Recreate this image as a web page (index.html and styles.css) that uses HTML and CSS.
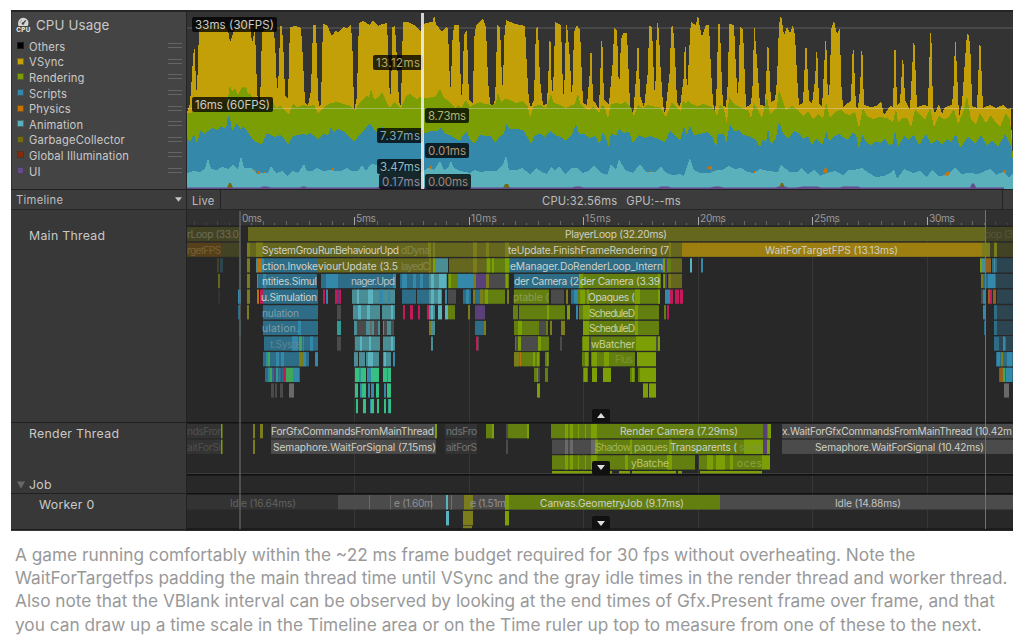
FILE: index.html
```html
<!DOCTYPE html>
<html lang="en">
<head>
<meta charset="utf-8">
<title>CPU Usage</title>
<link rel="stylesheet" href="styles.css">
</head>
<body>
<figure class="figure">
  <div class="profiler">
    <section class="module">
      <div class="legend">
        <div class="legend-title">
          <svg class="cpu-icon" viewBox="0 0 15 16"><path d="M2.500 9C1 4.500 3.500.8 7.300.8s6.500 3.700 4.500 8.200z" fill="#d6d6d6"/><path d="M7.200 6.300 9.800 3.400" stroke="#444" stroke-width="1.300"/><circle cx="7" cy="6.500" r="1.300" fill="#444"/><path d="M4 5.500 5.500 3.300" stroke="#888"/><text x="7.300" y="14.800" text-anchor="middle" textLength="14">CPU</text></svg>
          <span>CPU Usage</span>
        </div>
        <ul class="series">
          <li><i class="swatch others"></i><span>Others</span><b class="grip"></b></li>
          <li><i class="swatch vsync"></i><span>VSync</span><b class="grip"></b></li>
          <li><i class="swatch rendering"></i><span>Rendering</span><b class="grip"></b></li>
          <li><i class="swatch scripts"></i><span>Scripts</span><b class="grip"></b></li>
          <li><i class="swatch physics"></i><span>Physics</span><b class="grip"></b></li>
          <li><i class="swatch animation"></i><span>Animation</span><b class="grip"></b></li>
          <li><i class="swatch gc"></i><span>GarbageCollector</span><b class="grip"></b></li>
          <li><i class="swatch gi"></i><span>Global Illumination</span><b class="grip"></b></li>
          <li><i class="swatch ui"></i><span>UI</span><b class="grip"></b></li>
        </ul>
      </div>
      <svg class="chart" id="chart" viewBox="187 12 826 177"></svg>
    </section>
    <div class="toolbar">
      <div class="view-select"><span>Timeline</span><svg class="caret" viewBox="0 0 8 5"><path d="M0 0h8L4 5z"/></svg></div>
      <div class="live">Live</div>
      <div class="stats"><span>CPU:32.56ms</span><span>GPU:--ms</span></div>
      <div class="tool-end"></div>
    </div>
    <section class="timeline">
      <div class="threads">
        <div class="thread main">Main Thread</div>
        <div class="thread render">Render Thread</div>
        <div class="thread job"><svg class="fold" viewBox="0 0 9 8"><path d="M0 0h9L4.500 8z"/></svg>Job</div>
        <div class="thread worker">Worker 0</div>
        <div class="thread more"></div>
      </div>
      <svg class="tracks" id="tracks" viewBox="187 210 826 321"></svg>
    </section>
  </div>
  <figcaption class="caption">A game running comfortably within the ~22 ms frame budget required for 30 fps without overheating. Note the<br>WaitForTargetfps padding the main thread time until VSync and the gray idle times in the render thread and worker thread.<br>Also note that the VBlank interval can be observed by looking at the end times of Gfx.Present frame over frame, and that<br>you can draw up a time scale in the Timeline area or on the Time ruler up top to measure from one of these to the next.</figcaption>
</figure>
<script src="profiler.js"></script>
</body>
</html>
```
FILE: styles.css
```css
* { box-sizing: border-box; }
body { margin: 0; background: #fff; font-family: Inter, "Liberation Sans", sans-serif; }
.figure { margin: 0; padding: 10px 0 0 11px; }
.profiler { width: 1002px; height: 521px; background: #282828; color: #c9c9c9; display: flex; flex-direction: column; overflow: hidden; border-top: 2px solid #242424; }
.module { display: flex; height: 177px; flex: none; }
.legend { width: 176px; background: #444; border-right: 1px solid #242424; border-left: 1px solid #303030; padding: 4px 4px 0 4px; }
.legend-title { display: flex; align-items: center; gap: 5px; height: 18px; font-size: 13.3px; letter-spacing: .15px; }
.cpu-icon { width: 15px; height: 16px; }
.cpu-icon text { font: 800 6.2px Inter, sans-serif; fill: #e2e2e2; }
.series { list-style: none; margin: 4px 0 0; padding: 0; font-size: 11.2px; letter-spacing: .16px; }
.series li { display: flex; align-items: center; height: 15.6px; line-height: 14px; }
.series span { padding-top: 2px; }
.swatch { width: 7px; height: 7px; margin: 0 5px 0 1px; border: 1px solid #30303088; }
.grip { margin-left: auto; width: 14px; height: 5px; border-top: 1px solid #656565; border-bottom: 1px solid #656565; }
.others { background: #000; } .vsync { background: #c6a209; } .rendering { background: #7b9e05; }
.scripts { background: #3488a9; } .physics { background: #c97205; } .animation { background: #5ab1bc; }
.gc { background: #726b10; } .gi { background: #842b0b; } .ui { background: #654b8c; }
.chart { width: 826px; height: 177px; background: #333; display: block; }
.badge { font-size: 11.5px; }
.toolbar { display: flex; flex: none; height: 21px; background: #3c3c3c; border-top: 1px solid #202020; border-bottom: 1px solid #262626; font-size: 11.2px; line-height: 22px; letter-spacing: .2px; color: #bdbdbd; }
.view-select { width: 176px; padding: 0 4px 0 5px; display: flex; justify-content: space-between; align-items: center; border-right: 1px solid #232323; }
.view-select span { padding-top: 1px; letter-spacing: .3px; }
.caret { width: 7px; height: 5px; fill: #c4c4c4; }
.live { width: 34px; padding-left: 5px; border-right: 1px solid #232323; }
.stats { flex: 1; display: flex; justify-content: center; gap: 9px; }
.tool-end { width: 11px; border-left: 1px solid #232323; }
.timeline { display: flex; height: 321px; flex: none; }
.threads { width: 176px; background: #383838; border-right: 1px solid #222; display: flex; flex-direction: column; font-size: 12.3px; letter-spacing: .3px; line-height: 16px; }
.thread { border-bottom: 1px solid #202020; flex: none; }
.main { height: 213px; padding: 18px 0 0 18px; }
.render { height: 51px; padding: 3px 0 0 18px; border-bottom: 0; }
.job { height: 20px; padding: 3px 0 0 6px; display: flex; gap: 4px; align-items: center; }
.fold { width: 8px; height: 8px; fill: #686868; }
.worker { height: 36px; padding: 3px 0 0 28px; }
.more { border: 0; }
.tracks { width: 826px; height: 321px; display: block; background: #282828; }
.tracks text { font-size: 10.2px; }
.caption { margin: 12px 0 0 4px; color: #999; font-size: 17.24px; line-height: 23.2px; white-space: nowrap; }
```
FILE: profiler.js
```js
const NS = 'http://www.w3.org/2000/svg';
function el(parent, name, attrs, text) {
  const n = document.createElementNS(NS, name);
  for (const k in attrs) n.setAttribute(k, attrs[k]);
  if (text) n.textContent = text;
  parent.appendChild(n);
  return n;
}

/* ---------- usage chart ---------- */
const chart = document.getElementById('chart');
const vsync = '187,113 190,103 191,90 193,58 194,49 195,50 196,90 197,90 198,60 199,30 203,24 208,27 214,24 222,26 228,30 230,42 231,40 234,31 238,24 244,20 250,24 252,43 255,30 257,88 258,104 260,104 261,70 262,32 268,28 274,31 276,60 277,94 279,70 280,26 282,26 284,60 285,96 288,99 289,60 290,27 295,26 301,28 303,60 305,103 308,106 311,90 313,28 313,25 316,25 318,95 319,106 321,105 322,60 323,24 327,25 332,36 336,30 338,33 343,27 347,28 351,24 353,60 354,112 357,96 358,50 359,23 363,21 370,25 373,20 378,26 382,24 387,23 389,70 390,105 392,60 392,27 395,26 397,60 399,102 401,106 402,60 403,22 408,22 414,25 421,31 425,23 433,22 434,15 436,24 442,32 447,26 448,30 450,85 451,88 452,45 454,25 459,25 461,90 462,100 464,35 466,31 467,32 469,100 473,103 474,40 476,25 483,18 486,28 488,80 490,103 494,108 496,80 497,25 500,27 502,80 503,90 504,40 506,20 515,24 525,26 527,70 529,102 531,107 534,100 535,60 536,28 538,27 540,80 543,105 547,104 549,60 550,22 552,98 554,70 555,22 561,25 563,90 564,98 566,25 567,24 570,60 572,103 574,32 577,25 580,30 583,103 587,105 590,70 591,37 593,100 596,104 599,109 602,28 604,100 609,104 613,60 614,28 617,30 619,93 621,40 623,33 627,33 630,105 633,116 637,65 638,32 640,95 644,108 648,70 649,26 652,27 653,55 655,102 657,20 659,30 660,60 663,104 665,115 670,70 671,27 673,25 675,55 677,102 680,107 684,75 685,30 687,95 690,35 691,22 696,25 698,15 700,28 702,37 706,25 709,25 711,70 713,102 715,115 717,80 718,24 720,24 721,60 723,106 726,107 728,80 729,24 734,25 736,70 738,100 740,27 743,30 746,107 748,106 751,104 753,80 754,21 757,60 760,105 765,106 768,36 769,60 771,102 775,100 777,80 779,25 781,15 784,35 787,27 790,33 793,25 795,35 797,75 799,105 803,103 806,37 809,100 812,104 815,80 817,43 819,103 822,107 824,70 826,32 828,100 830,80 831,30 834,21 837,34 840,28 841,80 843,107 848,103 851,100 853,39 856,107 858,108 860,90 862,38 864,105 870,107 877,106 881,101 884,115 890,106 893,107 895,31 897,105 900,102 903,52 905,100 910,110 914,33 917,107 924,105 928,106 929,70 931,21 933,107 935,113 939,104 942,114 945,107 948,106 952,105 954,80 955,32 957,70 959,117 962,104 965,60 967,34 969,35 971,60 972,106 977,108 980,33 983,108 990,105 996,108 1003,105 1008,109 1011,108 1012,150 1013,170';
const rendering = '187,113 196,112 205,109 216,112 228,98 230,85 232,92 235,88 238,95 242,87 245,88 246,86 248,94 250,93 253,99 262,104 268,106 272,100 276,108 280,106 286,112 289,114 293,104 297,107 303,105 309,106 314,105 318,113 325,106 331,103 337,102 343,104 351,106 355,111 360,102 366,96 369,97 371,89 374,99 378,98 382,92 388,105 390,108 394,102 401,108 406,96 410,94 417,99 422,96 425,98 435,97 440,89 444,98 450,102 455,108 458,105 461,108 466,100 470,107 475,104 480,102 485,104 492,105 496,103 498,92 501,102 505,99 510,100 516,103 522,101 528,107 530,117 534,106 540,105 546,108 551,94 554,103 560,105 566,108 572,105 575,104 578,93 580,104 584,108 589,110 593,107 599,113 602,105 605,108 608,119 611,104 616,103 621,104 625,102 631,107 634,117 638,105 643,108 648,105 656,107 660,107 666,117 672,102 676,107 681,111 683,100 686,104 688,100 691,104 697,106 703,104 710,106 715,110 717,116 720,104 724,109 727,124 729,96 733,103 738,106 742,108 749,111 751,119 754,103 757,108 762,118 767,97 770,114 775,110 777,107 779,89 783,101 786,110 792,106 797,109 803,116 808,111 813,119 818,114 823,119 826,102 830,118 836,111 841,110 846,114 850,115 855,112 859,128 863,108 867,116 873,119 880,117 887,118 893,122 896,109 898,122 903,118 907,118 911,127 915,110 921,116 925,120 930,108 934,127 939,116 944,119 948,118 954,109 958,124 963,113 967,96 971,120 976,125 980,113 986,123 991,115 995,122 1000,127 1006,113 1010,120 1013,157';
const scripts = '187,137 190,142 194,134 197,143 201,129 204,134 208,131 213,128 217,130 221,126 226,129 228,116 230,117 232,131 237,123 240,129 243,126 247,131 251,137 255,142 262,144 267,133 271,135 275,137 280,135 284,138 288,145 293,136 303,134 307,135 310,133 313,135 318,140 323,134 328,135 331,127 334,132 337,129 343,131 348,135 354,142 360,134 365,129 370,123 373,128 378,134 382,126 388,138 395,130 401,137 408,130 414,132 420,135 425,133 432,131 437,131 441,127 445,134 450,135 455,138 460,141 463,135 467,132 470,140 475,143 480,135 486,136 491,136 495,143 500,136 504,134 506,123 510,129 516,129 523,130 528,138 531,144 535,135 541,134 545,137 550,131 557,136 561,137 566,141 572,134 576,124 579,134 584,134 590,138 595,136 600,144 602,133 605,135 609,147 611,133 616,136 619,129 623,133 629,132 633,143 639,135 645,138 650,136 658,139 665,142 670,131 675,136 680,141 684,126 687,135 690,126 694,135 700,134 707,132 712,136 716,147 718,134 721,134 724,133 726,143 730,124 734,131 739,130 743,135 749,136 755,139 760,147 763,139 766,143 768,128 771,145 776,138 779,121 783,133 788,139 794,131 800,134 803,139 808,136 812,145 816,139 822,145 827,131 829,142 833,137 839,134 844,138 848,140 852,133 856,134 859,150 862,134 866,142 871,145 875,141 880,143 885,139 889,145 893,144 895,130 898,147 904,136 908,140 914,135 919,145 926,134 931,144 937,140 942,144 947,139 951,142 956,134 960,148 968,137 975,144 981,135 987,146 992,140 998,147 1005,134 1011,146 1013,162';
const animation = '187,173 193,171 200,172 205,169 208,158 211,169 217,170 222,167 228,169 233,165 238,169 241,156 244,168 251,168 257,174 262,173 268,173 271,166 276,173 282,171 287,176 292,171 298,173 304,164 307,171 312,171 317,168 323,171 330,170 336,171 341,171 347,168 352,171 358,171 362,165 366,171 371,164 378,165 384,173 390,168 397,172 405,171 411,169 420,173 428,168 434,170 440,161 444,170 448,168 451,161 454,168 460,171 470,173 475,170 480,172 488,171 497,171 503,164 506,156 509,170 517,170 522,168 530,174 536,168 542,172 547,174 551,167 555,171 559,166 565,174 572,168 577,168 583,173 588,171 594,166 600,172 607,175 611,164 616,170 619,159 625,170 633,173 640,164 646,172 655,172 661,166 666,173 673,175 680,174 684,176 690,158 694,170 700,173 710,173 717,170 722,170 729,166 735,169 741,168 748,172 754,173 760,169 768,171 778,172 781,165 790,172 797,172 801,168 808,174 814,170 820,176 827,173 835,171 843,175 848,170 854,170 862,168 869,173 876,177 884,176 890,173 894,169 897,179 904,169 913,173 920,171 927,177 932,170 939,176 947,175 955,168 961,174 969,173 978,174 983,172 990,169 996,175 1003,172 1009,177 1013,173';
function area(points, fill) {
  el(chart, 'polygon', { points: '187,190 ' + points + ' 1013,190', fill, 'shape-rendering': 'crispEdges' });
}
area(vsync, '#c4a008');
area(rendering, '#7b9e05');
area(scripts, '#3488a9');
[[254, 171], [258, 172], [264, 173], [332, 169], [376, 168], [430, 167], [506, 161], [538, 173], [612, 168], [650, 172], [754, 172], [778, 172], [907, 172], [935, 175], [1004, 171]].forEach(p =>
  el(chart, 'rect', { x: p[0], y: p[1] - 1, width: 2, height: 4, fill: '#c97205' }));
area(animation, '#5ab1bc');
el(chart, 'path', { d: 'M706 168l4-2 2 1v3l-3-1zM823 173l2-6h1l2 6zM944 175l4-4 2 2-2 3z', fill: '#c97205' });
el(chart, 'path', { d: 'M227 188l2-5h2l2 5zM503 188l2-4h3l2 4zM779 188l2-5h2l2 5z', fill: '#726b10' });
el(chart, 'path', { d: 'M187 187.500h73l3-1h4l4 1h29l2-1h3l2 1h69l4-1h4l4 1h184l4-1h4l4 1h74l3-1h7l3 1h39l5-1h4l5 1h51l4-1h6l3 1h8l7-1h14l4 1h19l3-1h15l3 1h109l2-4h2l2 4h28v3H187z', fill: '#654b8c' });
el(chart, 'rect', { x: 187, y: 27, width: 826, height: 2, fill: '#aaa', opacity: .17 });
el(chart, 'rect', { x: 187, y: 108, width: 826, height: 1, fill: '#eee', opacity: .32 });
[[192, 17, 85, '33ms (30FPS)', '#ccc'], [192, 97, 81, '16ms (60FPS)', '#ccc'],
 [373, 55, 50, '13.12ms', '#b5ab70'], [377, 128, 46, '7.37ms', '#83a8b5'], [377, 159, 46, '3.47ms', '#94bcc2'], [379, 174, 44, '0.17ms', '#978ba6'],
 [425, 108, 44, '8.73ms', '#a9b572'], [425, 143, 44, '0.01ms', '#bb9870'], [425, 174, 46, '0.00ms', '#a98274']].forEach(b => {
  el(chart, 'rect', { x: b[0], y: b[1], width: b[2], height: 15, rx: 2, fill: '#000', opacity: .77 });
  el(chart, 'text', { class: 'badge', x: b[0] + 3, y: b[1] + 12, fill: b[4], textLength: b[2] - 6 }, b[3]);
});
el(chart, 'rect', { x: 421, y: 13, width: 3, height: 176, fill: '#f0f0ee', opacity: .85 });

/* ---------- timeline tracks ---------- */
const tracks = document.getElementById('tracks');
const C = {
  o: '#65671f', O: '#7b7d1d', d: '#424324', D: '#55401b', y: '#9c7f10',
  b: '#2d6d87', B: '#3488aa', n: '#2d4551', t: '#4b8d95', T: '#5ab3be',
  g: '#637f10', G: '#7b9f05', k: '#4b4b4b', K: '#696969', m: '#333333',
  r: '#c6195b', e: '#37c083', E: '#319b91', f: '#3ea858', w: '#b97309', p: '#594078', q: '#93601c'
};
const rect = (x, y, w, h, fill, opacity) => el(tracks, 'rect', { x, y, width: w, height: h, fill, opacity: opacity || 1 });
function row(y, h, spec) {
  spec.trim().split(/\s+/).forEach(s => {
    const m = s.match(/^([a-zA-Z])([\d.]+)-([\d.]+)$/);
    rect(+m[2], y, m[3] - m[2], h, C[m[1]]);
  });
}
/* ruler */
rect(187, 210, 826, 16, '#363636');
rect(187, 210, 53, 16, '#303030');
rect(985, 210, 28, 16, '#303030');
rect(187, 225.5, 826, 1, '#202020');
for (let i = -4; i < 68; i++) {
  const x = 240 + i * 11.445;
  if (i % 10) rect(Math.round(x), i % 2 ? 223 : 221, 1, i % 2 ? 2 : 4, i < 0 || i > 65 ? '#444' : '#686868');
}
for (let i = 0; i < 7; i++) {
  const x = Math.round(240 + i * 114.45);
  if (i) { rect(x, 217, 1, 8, '#aaa'); rect(x, 226, 1, 304, '#373737'); }
  el(tracks, 'text', { x: x + 2, y: 222, fill: '#999', textLength: i < 2 ? 20 : 26 }, i * 5 + 'ms');
}

const main = [
  'd187-240 o248-985 d985-1013',
  'D187-221 d221-240 O247-250 o250-682 O256-263 O428-431 O433-435 O473-477 O486-489 O505-509 O669-671 y682-982 O982-990 d990-1013 O994-997',
  'd217-219 n220-223 n239-241 O247-250 t256-258 w258-261 B261-264 b264-318 o318-435 O429-431 G433-435 t435-448 o449-486 O473-477 g486-510 G487-490 G492-494 G505-509 b510-663 G663-667 p665-667 g667-671 o671-682 T690-692 B701-703 G980-982 t982-985 q985-991 b992-997 t994-995 n997-1013',
  'o218-220 n239-241 O247-250 w257-258 b258-317 B263-266 b321-396 B326-338 B393-396 b400-429 B402-407 B413-416 B420-423 t429-447 T431-434 T439-446 g448-458 G449-451 B458-474 O473-476 p476-486 O486-489 k489-505 g505-509 G506-508 b514-579 g579-661 G579-583 G658-660 B663-664 G664-666 p665-667 o668-682 O669-671 O981-983 b983-996 B988-995 n996-1013',
  'm218-220 B238-241 O247-250 w257-259 r260-263 b263-318 r323-325 B326-328 r335-337 p337-340 r340-341 t352-395 T357-359 T368-373 B379-383 B388-390 b402-416 b417-429 t429-442 T431-434 T438-441 B445-447 k448-456 b463-471 B466-469 O473-475 b475-483 O480-483 g483-505 G485-488 O507-509 g514-549 k551-564 O566-568 b571-574 B574-577 B577-580 g578-660 G580-585 G587-589 G635-640 G658-660 B665-670 r670-673 r675-679 r680-683 k981-983 B983-986 q988-990 r990-992 q993-996 n997-1013',
  'b238-240 O247-249 b263-318 k337-341 t353-380 T358-361 T367-370 t382-395 T391-393 r403-405 r410-413 r418-420 r427-429 t429-435 T431-433 T438-442 T445-448 g448-455 O468-470 p475-485 g513-518 g519-565 G547-549 G567-570 B576-578 g579-659 G583-590 G635-638 g664-666 r667-669 B983-986 n994-1013 b994-997',
  'n239-241 b263-318 B298-301 E337-341 t354-380 k357-366 K370-372 k374-378 t383-394 k384-387 k391-394 O429-431 t431-435 b475-484 O484-486 g514-548 G518-522 k539-546 O550-552 O561-565 g583-659 G583-589 G635-638 b984-986 n994-1013 b994-997',
  'b264-318 B292-298 f299-302 O303-304 B310-313 k337-341 t355-380 T360-362 T369-371 t383-395 T391-393 t431-433 r476-478 k478-479 g515-549 k516-538 G518-521 G538-541 k560-562 g582-660 G583-589 k589-591 G636-656 k656-658 G658-660 b994-1013 n999-1003 B1003-1005 n1006-1013',
  'b263-309 B266-268 f268-270 B276-279 B281-284 O299-303 B303-306 B315-318 t354-358 t359-365 t366-379 T368-373 t383-391 T384-386 B393-395 g514-540 O514-519 w520-521 G533-535 G537-539 g545-549 G547-548 g582-589 G585-588 g591-635 G592-597 G604-609 G637-656 b996-1013 B997-1000 O1001-1003 B1007-1012',
  'b265-300 B268-270 f270-272 p274-276 E276-278 q279-280 p281-282 r283-285 f285-293 r284-286 B293-299 e355-366 E359-361 B367-371 e371-379 e383-391 B387-388 g534-537 k537-540 G537-538 g545-548 g583-588 G584-587 G592-597 G603-611 g630-635 G632-634 g638-640 G640-656 b999-1013 q1000-1003 f1003-1005 B1006-1012',
  'k271-274 k275-277 k280-283 K289-294 e355-358 B360-362 e362-366 B368-370 B371-374 e376-379 B384-386 e387-391 G537-540 G643-648 G649-656 K1004-1009',
  'e356-358 e363-366 B370-371 e371-374 e377-379 e384-386 E388-389 e389-391'
];
main.forEach((s, i) => row(227 + 15.64 * i, 14.2, s));
rect(187, 422, 826, 1.4, '#121212');

const render = [
  'm187-221 G221-222.5 O253-255 O260-263 k271-436 G435-437 m445-477 g486-494 G492-494 k506-508 g508-529 G527-529 g551-771 G565-568 G570-573 G578-579 G585-586 G591-597 p763-767 G768-771 k782-1013',
  'm187-221 G221-222.5 O253-255 k271-436 m445-477 k506-508 k552-595 K565-568 K570-573 K591-595 g595-770 G595-598 G630-632 G669-672 G744-763 p763-767 G767-770 k782-1013',
  'g552-695 G565-568 G570-573 G578-579 G585-586 G591-597 G625-628 G667-672 g699-763 G707-713 G716-725 G730-733 G762-770'
];
render.forEach((s, i) => row(424 + 15.64 * i, 14.3, s));
row(471, 3, 'G552-612 G619-630 G632-676 G678-682 G700-762');
rect(187, 473, 826, 1, '#484848', .6);
rect(187, 474, 826, 1.6, '#111');
rect(187, 493, 826, 1.3, '#111');
row(495, 14.5, 'm187-338 k338-1013 K369-370 K390-391 K431-432 T446-448 O451-452 O464-473 g505-720 G505-509');
row(511, 14.4, 'T446-449 O463-473 G505-509');
row(526, 2.5, 'O463-472');
rect(187, 528.5, 826, 1, '#111');
rect(239, 211, 2, 318, '#666', .65);
rect(985, 210, 1, 319, '#727272');

/* sample names: y, left, width, text, fill */
const hi = '#d0d0c6', dim = '#6d6d55';
[
  [227, 187, 52, 'rLoop (33.0', dim], [227, 565, 102, 'PlayerLoop (32.20ms)', hi], [227, 985, 28, 'oop (3', '#55553b'],
  [242.6, 187, 34, 'rgetFPS', '#776035'], [242.6, 262, 56, 'SystemGrou', hi], [242.6, 318, 81, 'RunBehaviourUpd', hi], [242.6, 401, 29, 'dDyna', '#85854c'],
  [242.6, 508, 161, 'teUpdate.FinishFrameRendering (7', hi], [242.6, 765, 133, 'WaitForTargetFPS (13.13ms)', hi],
  [258.3, 262, 56, 'ction.Invoke', hi], [258.3, 318, 80, 'viourUpdate (3.5', hi], [258.3, 401, 29, 'layedC', '#85854c'], [258.3, 510, 153, 'eManager.DoRenderLoop_Intern', hi],
  [273.9, 262, 55, 'ntities.Simul', hi], [273.9, 351, 44, 'nager.Upd', '#b9c4c6'], [273.9, 514, 65, 'der Camera (2', hi], [273.9, 580, 80, 'der Camera (3.39', hi],
  [289.5, 261, 56, 'u.Simulation', hi], [289.5, 513, 36, 'ptable (', '#8d9d53'], [289.5, 588, 47, 'Opaques (', hi],
  [305.2, 262, 37, 'nulation', '#829da7'], [305.2, 589, 46, 'ScheduleD', '#c7d29d'],
  [320.8, 262, 37, 'ulation.', '#829da7'], [320.8, 589, 46, 'ScheduleD', '#c7d29d'],
  [336.5, 270, 31, 't.Syste', '#5f8590'], [336.5, 591, 44, 'wBatcher', '#c7d29d'], [352.1, 615, 18, 'Flus', '#7d962d'],
  [424, 187, 34, 'ndsFror', '#505050'], [424, 271, 163, 'ForGfxCommandsFromMainThread', hi], [424, 446, 31, 'ndsFro', '#747474'], [424, 620, 118, 'Render Camera (7.29ms)', hi], [424, 782, 230, 'x.WaitForGfxCommandsFromMainThread (10.42m', hi],
  [439.6, 187, 34, 'aitForSi', '#505050'], [439.6, 273, 163, 'Semaphore.WaitForSignal (7.15ms)', hi], [439.6, 446, 31, 'aitForS', '#747474'],
  [439.6, 595, 36, 'Shadow', '#a2b35b'], [439.6, 634, 34, 'paques', '#b0bd70'], [439.6, 670, 67, 'Transparents (', hi], [439.6, 739, 23, 'ssing', '#80983a'], [439.6, 815, 169, 'Semaphore.WaitForSignal (10.42ms)', hi],
  [455.3, 631, 38, 'yBatche', '#b8c875'], [455.3, 737, 25, 'oces', '#8ca23e'],
  [495.2, 230, 66, 'Idle (16.64ms)', '#626262'], [495.2, 394, 39, 'e (1.60m', '#909090'], [495.2, 470, 36, 'e (1.51m', '#909090'], [495.2, 540, 144, 'Canvas.GeometryJob (9.17ms)', hi], [495.2, 835, 66, 'Idle (14.88ms)', '#c4c4c4']
].forEach(t => {
  const box = el(tracks, 'svg', { x: t[1], y: t[0], width: t[2], height: 15, overflow: 'hidden' });
  el(box, 'text', { x: 0, y: 11.4, fill: t[4], textLength: t[2] }, t[3]);
});

/* scroll buttons */
[[409, 'M-4 9h8l-4-5z'], [461, 'M-4 4h8l-4 5z'], [516, 'M-4 5h8l-4 5z']].forEach(b => {
  el(tracks, 'rect', { x: 592, y: b[0], width: 18, height: 13.5, rx: 2, fill: '#111' });
  el(tracks, 'path', { d: b[1], fill: '#ddd', transform: 'translate(601 ' + b[0] + ')' });
});
```
